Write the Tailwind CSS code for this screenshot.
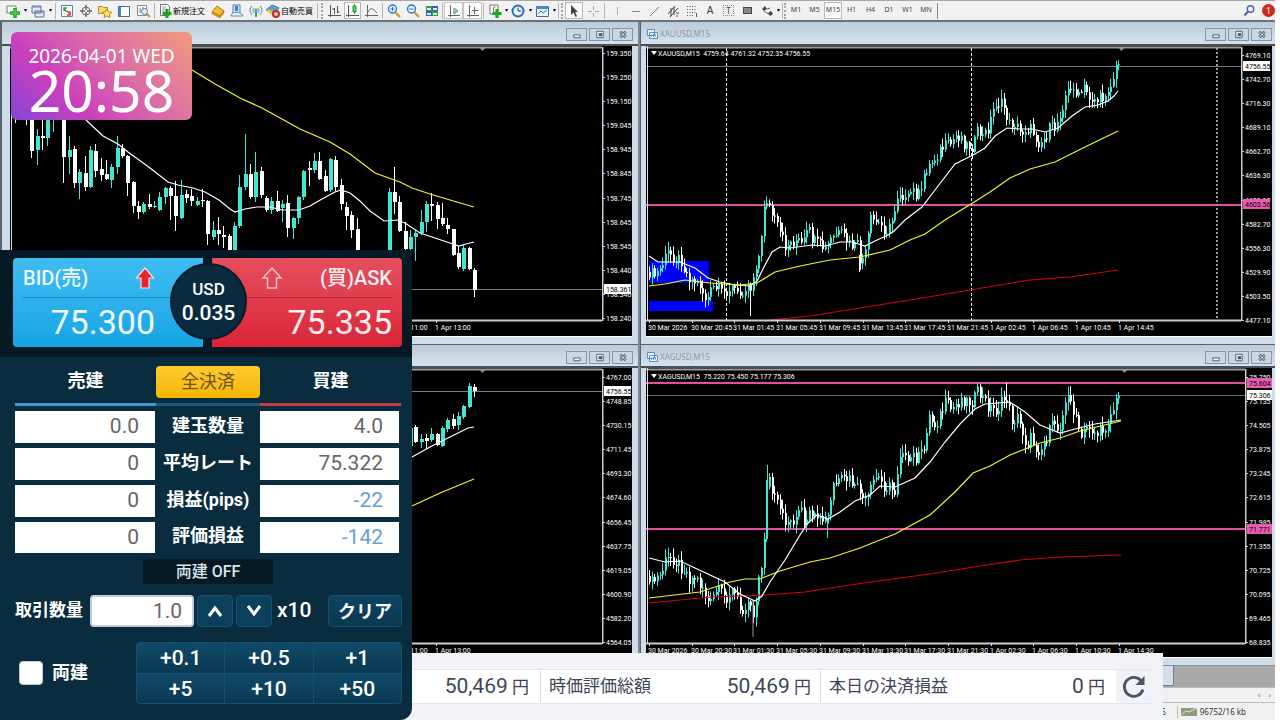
<!DOCTYPE html>
<html lang="ja">
<head>
  <meta charset="UTF-8" />
  <meta name="viewport" content="width=device-width, initial-scale=1.0" />
  <title>XAGUSD,M15</title>
  <script src="https://cdn.jsdelivr.net/npm/@tailwindcss/browser@4"></script>
</head>
<body class="relative h-screen min-h-[720px] flex flex-col overflow-hidden bg-white font-['Noto_Sans','Noto_Sans_CJK_JP',sans-serif] text-black">

  <!-- Toolbar -->
  <header class="h-[22px] shrink-0 mr-[5px] flex items-center bg-[#f1f1f1] border-t border-[#a8a8a8] border-b-2 border-b-[#6b7178] text-[8px] whitespace-nowrap">
    <div class="flex items-center pl-1">
      <button aria-label="New chart" class="w-[18px] h-[18px] grid place-items-center"><svg class="size-4" viewBox="0 0 16 16"><path d="M2 3h9v7H2z" fill="#fff" stroke="#6b8a6b"/><path d="M10 5v10M5 10h10" stroke="#16a51e" stroke-width="3.4"/><path d="M10 6v8M6 10h8" stroke="#5ce05c"/></svg></button>
      <span class="w-[7px] text-[6px] text-center">▾</span>
      <button aria-label="Profiles" class="w-[18px] h-[18px] grid place-items-center"><svg class="size-4" viewBox="0 0 16 16"><path d="M2 3h9v7H2zM5 8h9v6H5z" fill="#dfe8f5" stroke="#5f7597"/><path d="M2 4h9M5 9h9" stroke="#5f83bb"/></svg></button>
      <span class="w-[7px] text-[6px] text-center">▾</span>
      <span class="w-px h-4 bg-[#b5b5b5] mx-[1px]"></span>
      <button aria-label="Market Watch" class="w-[19px] h-[18px] grid place-items-center"><svg class="size-4" viewBox="0 0 16 16"><path d="M2.500 2.500h11v11h-11z" fill="#fff" stroke="#5b86b8"/><path d="M5 8V5h3M4.500 5.500l3 3" stroke="#22a03a" stroke-width="1.500" fill="none"/><path d="M11 8v4H8M8 8l3 3" stroke="#d0433a" stroke-width="1.500" fill="none"/></svg></button>
      <button aria-label="Data Window" class="w-[19px] h-[18px] grid place-items-center"><svg class="size-4" viewBox="0 0 16 16" fill="none" stroke="#6b6b6b"><circle cx="8" cy="8" r="4"/><path d="M8 2v5M8 9v5M2 8h5M9 8h5" stroke-width="1.500"/></svg></button>
      <button aria-label="Navigator" class="w-[19px] h-[18px] grid place-items-center"><svg class="size-4" viewBox="0 0 16 16"><path d="M1.500 3.500h4l1 1h4v6h-9z" fill="#f7d977" stroke="#b58b1c"/><path d="M10 6l1.500 2.800 3.200.4-2.300 2.200.6 3.200-3-1.600-2.900 1.600.6-3.200L5.500 9.200l3-.4z" fill="#ffe45c" stroke="#b58b1c"/></svg></button>
      <button aria-label="Terminal" class="w-[19px] h-[18px] grid place-items-center"><svg class="size-4" viewBox="0 0 16 16"><path d="M2.500 3.500h11v10h-11z" fill="#fff" stroke="#3d6ea8"/><path d="M3 4h2v9H3z" fill="#4a86c8"/></svg></button>
      <button aria-label="Strategy Tester" class="w-[19px] h-[18px] grid place-items-center"><svg class="size-4" viewBox="0 0 16 16" fill="none"><path d="M2.500 2.500h9v10h-9z" fill="#fff" stroke="#8a8a8a"/><path d="M5 10V5M8 9V4" stroke="#777"/><circle cx="9.500" cy="8.500" r="3" fill="#dfeeff" stroke="#5f7fa5"/><path d="M12 11l3 3" stroke="#c39b34" stroke-width="2"/></svg></button>
      <span class="w-px h-4 bg-[#b5b5b5] mx-[2px]"></span>
      <button class="flex items-center h-[18px] pr-[3px] font-['Noto_Sans_CJK_JP',sans-serif]"><svg class="size-4" viewBox="0 0 16 16"><path d="M3.500 1.500h7l2 2v9h-9z" fill="#fff" stroke="#777"/><path d="M5 4h4M5 6h5M5 8h4" stroke="#999"/><path d="M10 6v9M5.500 10.500h9" stroke="#19a823" stroke-width="3"/></svg>新規注文</button>
      <button aria-label="MetaEditor" class="w-[19px] h-[18px] grid place-items-center"><svg class="size-4" viewBox="0 0 16 16"><path d="M2 9l5-6 7 5-4 5z" fill="#f2bd34" stroke="#a67713"/><path d="M2 9v2l8 4 4-5V8l-4 5z" fill="#d99a1b" stroke="#a67713" stroke-width=".5"/></svg></button>
      <button aria-label="Community" class="w-[19px] h-[18px] grid place-items-center"><svg class="size-4" viewBox="0 0 16 16"><path d="M4 2h7v8H4z" fill="#cfe4f8" stroke="#3f83c4"/><path d="M6 3h3v5H6z" fill="#3f83c4"/><path d="M2 13c0-5 11-5 12 0z" fill="#e4eef8" stroke="#6d8fb3"/></svg></button>
      <button aria-label="Signals" class="w-[19px] h-[18px] grid place-items-center"><svg class="size-4" viewBox="0 0 16 16" fill="none"><path d="M4 12a6 6 0 0 1 0-9M12 3a6 6 0 0 1 0 9M6 10a4 4 0 0 1 0-5M10 5a4 4 0 0 1 0 5" stroke="#7ba6bd" stroke-width="1.200"/><path d="M8 7v7" stroke="#3fa565" stroke-width="2"/><circle cx="8" cy="7" r="1.500" fill="#3fa565"/></svg></button>
      <button class="flex items-center h-[18px] font-['Noto_Sans_CJK_JP',sans-serif]"><svg class="size-4" viewBox="0 0 16 16"><path d="M1 7l6-5 7 3-5 6z" fill="#5aa4dd" stroke="#3876a8"/><path d="M2 8l6 5 3-3-8-4z" fill="#f3c536"/><circle cx="11" cy="11" r="4" fill="#d3271f"/><path d="M9.500 9.500h3v3h-3z" fill="#fff"/></svg>自動売買</button>
      <span class="w-px h-4 bg-[#b5b5b5] ml-1"></span>
    </div>
    <div class="flex items-center pl-[3px]">
      <span class="h-4 border-l-2 border-dotted border-[#a5a5a5] mr-[2px]"></span>
      <button aria-label="Bar chart" class="w-[19px] h-[18px] grid place-items-center"><svg class="size-4" viewBox="0 0 16 16" fill="none" stroke="#555"><path d="M3.500 2v12M1 12.500h13M7.500 5v6M7 6h-2M10.500 3v7M10.500 9h2"/></svg></button>
      <button aria-label="Candlesticks" aria-pressed="true" class="w-[17px] h-[17px] grid place-items-center bg-[#fafafa] border border-[#b8b8b8]"><svg class="size-4" viewBox="0 0 16 16" fill="none" stroke="#555"><path d="M3.500 2v12M1 12.500h13"/><path d="M9.500 1v10" stroke="#1a9c2e"/><path d="M8 3h3v6H8z" fill="#57d266" stroke="#1a9c2e"/></svg></button>
      <button aria-label="Line chart" class="w-[21px] h-[18px] grid place-items-center"><svg class="size-4" viewBox="0 0 16 16" fill="none" stroke="#666"><path d="M3.500 2v12M1 12.500h13M4 9c3-5 4-4 9 1"/></svg></button>
      <span class="w-px h-4 bg-[#b5b5b5] mr-[1px]"></span>
      <button aria-label="Zoom in" class="w-[19px] h-[18px] grid place-items-center"><svg class="size-4" viewBox="0 0 16 16" fill="none"><path d="M9.500 9.500l4.500 4.500" stroke="#c9a227" stroke-width="2.400"/><circle cx="6.500" cy="6" r="4" fill="#e4f1ff" stroke="#2f77c6" stroke-width="1.400"/><path d="M6.500 4v4M4.500 6h4" stroke="#2f77c6"/></svg></button>
      <button aria-label="Zoom out" class="w-[19px] h-[18px] grid place-items-center"><svg class="size-4" viewBox="0 0 16 16" fill="none"><path d="M9.500 9.500l4.500 4.500" stroke="#c9a227" stroke-width="2.400"/><circle cx="6.500" cy="6" r="4" fill="#e4f1ff" stroke="#2f77c6" stroke-width="1.400"/><path d="M4.500 6h4" stroke="#2f77c6"/></svg></button>
      <button aria-label="Tile windows" class="w-[19px] h-[18px] grid place-items-center"><svg class="size-4" viewBox="0 0 16 16"><path d="M2 3h6v5H2z" fill="#3c9a46"/><path d="M8 3h6v5H8z" fill="#2e66ad"/><path d="M2 8h6v5H2z" fill="#2e66ad"/><path d="M8 8h6v5H8z" fill="#3c9a46"/><path d="M3 5h4v2H3zM9 5h4v2H9zM3 10h4v2H3zM9 10h4v2H9z" fill="#dfeaf5"/></svg></button>
      <span class="w-px h-4 bg-[#b5b5b5] mx-[1px]"></span>
      <button aria-label="Auto scroll" aria-pressed="true" class="w-[19px] h-[17px] grid place-items-center bg-[#fafafa] border border-[#c4c4c4]"><svg class="size-4" viewBox="0 0 16 16" fill="none" stroke="#666"><path d="M4.500 2v12M2 12.500h12"/><path d="M8 5l4 3-4 3z" fill="#a8d5a8" stroke="#5b9a68"/></svg></button>
      <button aria-label="Chart shift" aria-pressed="true" class="w-[19px] h-[17px] grid place-items-center bg-[#fafafa] border border-[#c4c4c4]"><svg class="size-4" viewBox="0 0 16 16" fill="none" stroke="#666"><path d="M4.500 2v12M2 12.500h12M9.500 4v7M7 7.500h6"/></svg></button>
      <span class="w-px h-4 bg-[#b5b5b5] mx-[1px]"></span>
      <button aria-label="Indicators" class="w-[19px] h-[18px] grid place-items-center"><svg class="size-4" viewBox="0 0 16 16"><path d="M3 2h8v9H3z" fill="#fff" stroke="#777"/><path d="M6.500 9V5q0-1.500 2-1" fill="none" stroke="#777"/><path d="M10 6v9M5.500 10.500h9" stroke="#19a823" stroke-width="3.200"/></svg></button>
      <span class="w-[4px] text-[6px] text-center">▾</span>
      <button aria-label="Periods" class="w-[20px] h-[18px] grid place-items-center"><svg class="size-4" viewBox="0 0 16 16"><circle cx="8" cy="8" r="5.500" fill="#e9f3ff" stroke="#2a6dbb" stroke-width="2"/><path d="M8 4.500V8h3" stroke="#333" fill="none"/></svg></button>
      <span class="w-[4px] text-[6px] text-center">▾</span>
      <button aria-label="Templates" class="w-[20px] h-[18px] grid place-items-center"><svg class="size-4" viewBox="0 0 16 16"><path d="M2.500 3.500h12v10h-12z" fill="#e9f3ff" stroke="#3d6ea8"/><path d="M2 3h13v3H2z" fill="#4a86c8"/><path d="M4 11l3-3 2 2 4-3" fill="none" stroke="#3c9a46"/></svg></button>
      <span class="w-[4px] text-[6px] text-center">▾</span>
      <span class="w-px h-4 bg-[#b5b5b5] ml-[2px]"></span>
    </div>
    <div class="flex items-center pl-[2px]">
      <span class="h-4 border-l-2 border-dotted border-[#a5a5a5] mr-[2px]"></span>
      <button aria-label="Cursor" aria-pressed="true" class="w-[18px] h-[17px] grid place-items-center bg-[#fafafa] border border-[#b8b8b8]"><svg class="size-4" viewBox="0 0 16 16"><path d="M5 2v10l2.500-2.500L9.500 14l1.500-.8L9.200 9H12z" fill="#444"/></svg></button>
      <button aria-label="Crosshair" class="w-[19px] h-[18px] grid place-items-center"><svg class="size-4" viewBox="0 0 16 16" stroke="#aaa"><path d="M8.500 3v4M8.500 10v4M3 8.500h4M10 8.500h4"/></svg></button>
      <span class="w-px h-4 bg-[#b5b5b5] mx-[2px]"></span>
      <button aria-label="Vertical line" class="w-[19px] h-[18px] grid place-items-center"><svg class="size-4" viewBox="0 0 16 16" stroke="#aaa"><path d="M8.500 4v8"/></svg></button>
      <button aria-label="Horizontal line" class="w-[19px] h-[18px] grid place-items-center"><svg class="size-4" viewBox="0 0 16 16" stroke="#888"><path d="M4 8.500h8"/></svg></button>
      <button aria-label="Trend line" class="w-[18px] h-[18px] grid place-items-center"><svg class="size-4" viewBox="0 0 16 16" stroke="#777"><path d="M4 13l9-9"/></svg></button>
      <button aria-label="Channel" class="w-[19px] h-[18px] grid place-items-center"><svg class="size-4" viewBox="0 0 16 16" stroke="#444" fill="none"><path d="M3 11l7-8M5 14l8-9M6 5v8M9 4v8M11 10h3M11 13h2"/></svg></button>
      <button aria-label="Fibonacci" class="w-[19px] h-[18px] grid place-items-center"><svg class="size-4" viewBox="0 0 16 16" stroke="#555" stroke-dasharray="1 1.500"><path d="M3 3.500h10M3 6.500h10M3 9.500h10M3 12.500h6"/><path d="M12.500 10v4" stroke-dasharray="none"/></svg></button>
      <button aria-label="Text" class="w-[18px] h-[18px] text-[10px] leading-none text-[#444] font-['Liberation_Sans',sans-serif]">A</button>
      <button aria-label="Text label" class="w-[19px] h-[18px] grid place-items-center"><span class="border border-dotted border-[#888] px-[2px] text-[8px] leading-[9px] text-[#444]">T</span></button>
      <button aria-label="Shapes" class="w-[19px] h-[18px] grid place-items-center"><span class="w-[9px] h-[7px] bg-[#888] border border-[#444]"></span></button>
      <button aria-label="Arrows" class="w-[19px] h-[18px] grid place-items-center"><svg class="size-4" viewBox="0 0 16 16" fill="#444"><path d="M3 6l3-3 2 3-3 2zM9 10l3-2 2 3-3 2z"/><path d="M5 8l6 4M8 6l3-1" stroke="#666" fill="none"/></svg></button>
      <span class="w-[5px] text-[6px] text-center">▾</span>
      <span class="w-px h-4 bg-[#b5b5b5] mx-[1px]"></span>
    </div>
    <div class="flex items-center text-[7px] text-[#444]">
      <span class="h-4 border-l-2 border-dotted border-[#a5a5a5] mr-[1px]"></span>
      <button class="w-[18px]">M1</button>
      <button class="w-[19px]">M5</button>
      <button aria-pressed="true" class="w-[18px] h-[17px] bg-[#fafafa] border border-[#b8b8b8]">M15</button>
      <button class="w-[19px]">H1</button>
      <button class="w-[19px]">H4</button>
      <button class="w-[18px]">D1</button>
      <button class="w-[19px]">W1</button>
      <button class="w-[18px]">MN</button>
      <span class="w-px h-4 bg-[#888] ml-[2px]"></span>
    </div>
    <div class="ml-auto flex items-center gap-[5px]">
      <button aria-label="Search" class="w-4 h-[18px] grid place-items-center"><svg class="size-4" viewBox="0 0 16 16" fill="none" stroke="#4a62a8"><circle cx="9.500" cy="6" r="3.200" stroke-width="1.400"/><path d="M7 8.500l-3.500 4" stroke-width="2"/></svg></button>
      <button aria-label="Notifications" class="w-[13px] h-[18px]"><span class="block size-[13px] rounded-full bg-[#d0261e] text-white text-[9px] leading-[13px]">1</span></button>
    </div>
  </header>

  <!-- Chart windows -->
  <main class="flex-1 min-h-0 mr-[5px] grid grid-cols-[128fr_127fr] grid-rows-[322px_1fr] font-['Noto_Sans',sans-serif]">
    <section class="min-h-0 flex flex-col pl-2 pr-[6px] pb-[7px] bg-[#cfdce9] border-l-2 border-[#59636e] border-r-2 border-r-[#7d8893]">
      <div class="h-6 shrink-0 -ml-2 -mr-[6px] pl-2 pr-[5px] pt-[2px] flex items-center justify-between bg-linear-to-b from-[#bccbd8] to-[#d5e2ee] border-b-2 border-[#4a4f55]">
        <h2></h2>
        <div data-controls class="flex gap-[2px]"></div>
      </div>
      <div class="flex-1 min-h-0 flex bg-black border-b border-white">
        <svg id="plot-usdjpy" class="flex-1 min-w-0 h-full"></svg>
        <svg id="axis-usdjpy" class="w-[30px] h-full"></svg>
      </div>
    </section>

    <section class="min-h-0 flex flex-col pl-[5px] pr-[3px] pb-[7px] bg-[#cfdce9] border-l border-[#59636e]">
      <div class="h-6 shrink-0 -ml-[5px] -mr-[3px] pl-[5px] pr-[3px] pt-[2px] flex items-center justify-between bg-linear-to-b from-[#bccbd8] to-[#d5e2ee] border-b-2 border-[#4a4f55]">
        <h2 class="flex items-center gap-[2px] text-[8px] text-[#8e99a5]"><svg class="size-3" viewBox="0 0 12 12" fill="#eaf3ff" stroke="#5a8fc4"><path d="M1.500 1.500h7v6h-7zM3.500 4.500h8v6h-8z"/><path d="M5.500 6.500v2M7.500 6v3M9.500 6.500v2"/></svg>XAUUSD,M15</h2>
        <div data-controls class="flex gap-[2px]"></div>
      </div>
      <div class="flex-1 min-h-0 flex bg-black border-b border-white">
        <svg id="plot-xauusd" class="flex-1 min-w-0 h-full"></svg>
        <svg id="axis-xauusd" class="w-[31px] h-full"></svg>
      </div>
    </section>

    <section class="min-h-0 flex flex-col pl-2 pr-[6px] pb-[7px] bg-[#cfdce9] border-l-2 border-[#59636e] border-r-2 border-r-[#7d8893]">
      <div class="h-6 shrink-0 -ml-2 -mr-[6px] pl-2 pr-[5px] pt-[3px] flex items-center justify-between bg-linear-to-b from-[#bccbd8] to-[#d5e2ee] border-t border-t-[#59636e] border-b-2 border-b-[#4a4f55]">
        <h2></h2>
        <div data-controls class="flex gap-[2px]"></div>
      </div>
      <div class="flex-1 min-h-0 flex bg-black border-b border-white">
        <svg id="plot-gold" class="flex-1 min-w-0 h-full"></svg>
        <svg id="axis-gold" class="w-[30px] h-full"></svg>
      </div>
    </section>

    <section class="min-h-0 flex flex-col pl-[5px] pr-[3px] pb-[7px] bg-[#cfdce9] border-l border-[#59636e]">
      <div class="h-6 shrink-0 -ml-[5px] -mr-[3px] pl-[5px] pr-[3px] pt-[3px] flex items-center justify-between bg-linear-to-b from-[#bccbd8] to-[#d5e2ee] border-t border-t-[#59636e] border-b-2 border-b-[#4a4f55]">
        <h2 class="flex items-center gap-[2px] text-[8px] text-[#8e99a5]"><svg class="size-3" viewBox="0 0 12 12" fill="#eaf3ff" stroke="#5a8fc4"><path d="M1.500 1.500h7v6h-7zM3.500 4.500h8v6h-8z"/><path d="M5.500 6.500v2M7.500 6v3M9.500 6.500v2"/></svg>XAGUSD,M15</h2>
        <div data-controls class="flex gap-[2px]"></div>
      </div>
      <div class="flex-1 min-h-0 flex bg-black border-b border-white">
        <svg id="plot-xagusd" class="flex-1 min-w-0 h-full"></svg>
        <svg id="axis-xagusd" class="w-[27px] h-full"></svg>
      </div>
    </section>
  </main>

  <!-- Chart tabs and status bar -->
  <footer class="shrink-0 mr-[5px] text-[8px] text-[#333]">
    <div class="h-[22px] bg-[#a9a9a9] border-t border-[#8e8e8e] pl-[1100px]"><div class="w-[74px] h-5 bg-[#d3deea] border border-t-0 border-[#6f7c8c] rounded-b-xs"></div></div>
    <div class="h-4 bg-[#f0f0f0] border-y border-y-[#bbb] flex items-center justify-end gap-2 pr-1 text-[#777]"><span>‹</span><span>›</span></div>
    <div class="h-[17px] bg-[#f0f0f0] flex items-center justify-end pr-[29px]">
      <span class="mr-[11px]">6</span>
      <span class="flex items-center gap-[3px] border-l border-[#bbb] pl-[3px]"><svg class="w-4 h-2" viewBox="0 0 16 8"><path d="M0 0h16v8H0z" fill="#8d9a7c"/><path d="M0 7l5-4 3 1 8-4" stroke="#dde3d5" fill="none"/></svg>96752/16 kb</span>
    </div>
  </footer>

  <!-- Account bar -->
  <section class="absolute left-0 bottom-0 w-[1163px] h-[67px] pl-[400px] pr-[11px] py-4 bg-[#f1f3f8] font-['Roboto','Noto_Sans_CJK_JP',sans-serif] text-[#3c4656]">
    <dl class="h-[35px] flex items-center bg-white border-y border-[#e3e6ec] text-[17px]">
      <dd class="w-[141px] pr-[11px] text-right border-r border-[#d9dde5]"><span class="text-[21px]">50,469</span> 円</dd>
      <dt class="pl-2">時価評価総額</dt>
      <dd class="flex-1 pr-[9px] text-right border-r border-[#d9dde5]"><span class="text-[21px]">50,469</span> 円</dd>
      <dt class="pl-2">本日の決済損益</dt>
      <dd class="w-[168px] pr-[11px] text-right"><span class="text-[21px]">0</span> 円</dd>
      <dd class="w-9 h-full bg-[#f1f3f8]"><button aria-label="更新" class="w-full h-full grid place-items-center"><svg class="size-[26px]" viewBox="0 0 26 26" fill="none"><path d="M20 6.500a9.500 9.500 0 1 0 2 9" stroke="#4a5568" stroke-width="2.800"/><path d="M23.500 2v9H14.500z" fill="#4a5568"/></svg></button></dd>
    </dl>
  </section>

  <!-- Trading panel -->
  <section class="absolute left-0 bottom-0 w-[412px] h-[470px] rounded-br-xl overflow-hidden bg-[#092c3e] font-['Roboto','Noto_Sans_CJK_JP',sans-serif] text-white">
    <div class="relative h-[107px] bg-[#051a25] px-[13px] pt-2 pr-[10px] flex gap-[9px]">
      <button class="flex-1 h-[89px] rounded-l-sm bg-linear-to-b from-[#3fbdf2] to-[#12a4e4] pl-[10px] text-left text-[#eef8ff]">
        <span class="h-[39px] pr-[48px] flex items-center justify-between border-b border-[#1d87bd] text-[20px] font-medium">BID(売)
          <svg class="w-5 h-6" viewBox="0 0 20 24"><path d="M10 2l8.500 10H14v10H6V12H1.500z" fill="#e8232c" stroke="#f4dfe2" stroke-width="1.200"/></svg>
        </span>
        <span class="block pr-[48px] text-right text-[34px] leading-[48px]">75.300</span>
      </button>
      <button class="flex-1 h-[89px] rounded-r-sm bg-linear-to-b from-[#e44e5d] to-[#dc2238] pr-[10px] text-right text-[#fff0f0]">
        <span class="h-[39px] pl-[48px] flex items-center justify-between border-b border-[#b3243a] text-[20px] font-medium">
          <svg class="w-6 h-6" viewBox="0 0 24 24"><path d="M12 2l9 10h-4.500v10h-9V12H3z" fill="none" stroke="#f6c4c9" stroke-width="1.500"/></svg>(買)ASK
        </span>
        <span class="block text-right text-[34px] leading-[48px]">75.335</span>
      </button>
      <div class="absolute left-[170px] top-[13px] size-[77px] rounded-full bg-[#0a2a40] border-2 border-[#071d2a] flex flex-col items-center justify-center font-medium">
        <span class="text-[17px] leading-[23px]">USD</span>
        <span class="text-[21px] leading-[25px]">0.035</span>
      </div>
    </div>

    <table class="ml-[15px] w-[386px] table-fixed border-separate border-spacing-0 text-[18px]">
      <thead>
        <tr class="h-[49px]">
          <th class="w-[141px] border-b-3 border-[#3f98cd] font-bold">売建</th>
          <th class="w-[104px] border-b-3 border-[#1b5a7c]"><button class="w-full h-8 mt-[3px] rounded-sm bg-linear-to-b from-[#ffcb2b] to-[#f7b500] text-[#6a5420] font-normal">全決済</button></th>
          <th class="border-b-3 border-[#c53c44] font-bold">買建</th>
        </tr>
      </thead>
      <tbody class="text-[21px] text-right text-[#666]">
        <tr class="h-[37px]"><td class="border-t-5 border-r border-[#092c3e] bg-white bg-clip-padding pr-4">0.0</td><th class="pt-[2px] text-center text-[18px] text-white whitespace-nowrap">建玉数量</th><td class="border-t-5 border-r-2 border-[#092c3e] bg-white bg-clip-padding pr-4">4.0</td></tr>
        <tr class="h-[37px]"><td class="border-t-5 border-r border-[#092c3e] bg-white bg-clip-padding pr-4">0</td><th class="pt-[2px] text-center text-[18px] text-white whitespace-nowrap">平均レート</th><td class="border-t-5 border-r-2 border-[#092c3e] bg-white bg-clip-padding pr-4">75.322</td></tr>
        <tr class="h-[36px]"><td class="border-t-5 border-r border-[#092c3e] bg-white bg-clip-padding pr-4">0</td><th class="pt-[2px] text-center text-[18px] text-white whitespace-nowrap">損益(pips)</th><td class="border-t-5 border-r-2 border-[#092c3e] bg-white bg-clip-padding pr-4 text-[#64a0d8]">-22</td></tr>
        <tr class="h-[36px]"><td class="border-t-5 border-r border-[#092c3e] bg-white bg-clip-padding pr-4">0</td><th class="pt-[2px] text-center text-[18px] text-white whitespace-nowrap">評価損益</th><td class="border-t-5 border-r-2 border-[#092c3e] bg-white bg-clip-padding pr-4 text-[#64a0d8]">-142</td></tr>
      </tbody>
    </table>

    <div class="mt-[6px] ml-[143px] w-[130px] h-[25px] bg-[#051a25] text-center text-[16px] leading-[25px] font-medium text-[#dde3e6]">両建 OFF</div>

    <div class="mt-[11px] pl-[15px] pr-[10px] h-8 flex items-center">
      <label for="qty" class="w-[75px] text-[17px] font-bold whitespace-nowrap">取引数量</label>
      <input id="qty" type="text" value="1.0" class="w-[104px] h-8 rounded-sm bg-white border-2 border-[#c5ced8] pr-[10px] text-right text-[21px] text-[#666]" />
      <button aria-label="増やす" class="ml-[3px] w-9 h-8 rounded-sm bg-[#0b405c] border border-[#17506c] grid place-items-center"><svg class="size-4" viewBox="0 0 16 16" fill="none" stroke="#fff" stroke-width="3"><path d="M2 13l6-8 6 8"/></svg></button>
      <button aria-label="減らす" class="ml-[3px] w-9 h-8 rounded-sm bg-[#0b405c] border border-[#17506c] grid place-items-center"><svg class="size-4" viewBox="0 0 16 16" fill="none" stroke="#fff" stroke-width="3"><path d="M2 3l6 8 6-8"/></svg></button>
      <span class="ml-[5px] text-[21px] font-medium">x10</span>
      <button class="ml-auto w-[74px] h-8 rounded-sm bg-linear-to-b from-[#0d4462] to-[#0a3850] border border-[#17506c] text-[18px] font-bold">クリア</button>
    </div>

    <div class="mt-[15px] pl-[19px] pr-[10px] flex items-center justify-between">
      <label class="flex items-center gap-[9px] text-[18px] leading-6 font-bold"><input type="checkbox" class="appearance-none size-6 rounded-sm bg-white border border-[#c5ced8]" />両建</label>
      <div class="w-[266px] h-[62px] grid grid-cols-3 grid-rows-2 gap-px rounded-sm overflow-hidden border border-[#14516e] bg-[#14516e] text-[21px] font-medium">
        <button class="bg-linear-to-b from-[#0f4a69] to-[#0a3952]">+0.1</button>
        <button class="bg-linear-to-b from-[#0f4a69] to-[#0a3952]">+0.5</button>
        <button class="bg-linear-to-b from-[#0f4a69] to-[#0a3952]">+1</button>
        <button class="bg-linear-to-b from-[#0f4a69] to-[#0a3952]">+5</button>
        <button class="bg-linear-to-b from-[#0f4a69] to-[#0a3952]">+10</button>
        <button class="bg-linear-to-b from-[#0f4a69] to-[#0a3952]">+50</button>
      </div>
    </div>
  </section>

  <!-- Clock -->
  <div class="absolute left-[11px] top-8 w-[181px] h-[88px] rounded-md bg-linear-45 from-[#8442d6] via-[#cb3dbd] via-30% to-[#f29a7c] pt-3 text-center text-white font-['Noto_Sans',sans-serif]">
    <div class="text-[19px] leading-6">2026-04-01 WED</div>
    <div class="text-[57px] leading-[44px]">20:58</div>
  </div>

  <script>
    const TEAL = '#40e8d4', PINK = '#e0509f';

    // window buttons
    document.querySelectorAll('[data-controls]').forEach(el => {
      const shapes = [
        ['最小化', '<path d="M3.500 6.500h7v3h-7z"/>'],
        ['最大化', '<path d="M3.500 2.500h7v7h-7z"/><path d="M6 5h3v2.500H6z" fill="#4d5a68"/>'],
        ['閉じる', '<path d="M4 3l6 6M10 3l-6 6" stroke-width="3"/><path d="M4 3l6 6M10 3l-6 6" stroke="#fff"/>']
      ];
      el.innerHTML = shapes.map(s => `
        <button aria-label="${s[0]}" class="w-[21px] h-[13px] grid place-items-center bg-[#c9d6e3] border border-[#8795a4]">
          <svg class="w-[14px] h-[11px]" viewBox="0 0 14 12" fill="#eef3f8" stroke="#4d5a68">${s[1]}</svg>
        </button>`).join('');
    });

    const text = (x, y, s, fill = '#fff') =>
      `<text x="${x}" y="${y}" fill="${fill}" font-size="7" font-family="Roboto, sans-serif">${s}</text>`;
    const line = (pts, color) =>
      `<polyline points="${pts}" fill="none" stroke="${color}" stroke-width="1.2"/>`;
    const hline = (y, color, w = 1) =>
      `<rect x="0" y="${y}" width="3000" height="${w}" fill="${color}"/>`;

    // one candle: high, body top, body bottom, low
    function candle(x, h, t, b, l, up, w) {
      const c = up ? TEAL : '#fff';
      return `<path d="M${x} ${h}V${l}" stroke="${c}"/><rect x="${x + .5 - w / 2}" y="${t}" width="${w}" height="${Math.max(1, b - t)}" fill="${c}"/>`;
    }

    // dense candles along a track of "x,y" points
    function denseCandles(track, amp, extra) {
      const p = track.split(' ').map(s => s.split(',').map(Number));
      const rnd = n => { const v = Math.sin(n * 12.9898) * 43758.5453; return v - Math.floor(v); };
      const at = x => {
        let k = 1;
        while (k < p.length - 1 && p[k][0] < x) k++;
        const [x0, y0] = p[k - 1], [x1, y1] = p[k];
        return y0 + (y1 - y0) * Math.min(1, (x - x0) / (x1 - x0));
      };
      let out = '', prev = p[0][1];
      for (let x = p[0][0], i = 1; x <= p[p.length - 1][0]; x += 2.667, i++) {
        const close = at(x) + (rnd(i) - .5) * amp;
        const t = Math.min(prev, close), b = Math.max(prev, close);
        out += candle(Math.round(x) + .5, t - 1 - rnd(i + 500) * amp * .6, t, b, b + 1 + rnd(i + 900) * amp * .6, close < prev, 2);
        prev = close;
      }
      extra.forEach(e => out += `<path d="M${e[0]} ${e[1]}V${e[2]}" stroke="${e[3]}"/>`);
      return out;
    }

    function plot(id, ox, oy, bottom, marker, times, body) {
      let s = body;
      s += `<path d="M0 ${oy + 1.500}H3000" stroke="#9b9b9b" stroke-width="2"/><path d="M${ox + 1.500} ${oy}V${bottom}" stroke="#ddd"/>`;
      s += `<path d="M${marker - 3} ${oy + 1}h7l-3.500 4z" fill="#999"/>`;
      s += `<rect x="0" y="${bottom}" width="3000" height="40" fill="#000"/><path d="M0 ${bottom + .5}H3000" stroke="#ccc" stroke-width="2"/>`;
      times.forEach(t => s += `<path d="M${t[0] + .5} ${bottom}v3" stroke="#ddd"/>` + text(t[0] - 1, bottom + 10, t[1]));
      document.getElementById('plot-' + id).innerHTML = `<g transform="translate(${-ox},${-oy})">${s}</g>`;
    }

    function axis(id, oy, first, bottom, labels, tags) {
      let s = `<path d="M.5 ${oy + 1}V${bottom + 1}" stroke="#ccc" stroke-width="2"/>`;
      labels.split(' ').forEach((l, i) => {
        const y = first + i * 24 + (i > 5 ? 1 : 0);
        s += `<path d="M1 ${y + .5}h2" stroke="#ccc"/>` + text(4, y + 3, l);
      });
      tags.forEach(t => s += `<rect x="2" y="${t[0] - 5}" width="27" height="10" fill="${t[2]}"/>` + text(4, t[0] + 3, t[1], t[3]));
      document.getElementById('axis-' + id).innerHTML = `<g transform="translate(0,${-oy})">${s}</g>`;
    }

    const wide = (data, from) => data.map((c, i) =>
      c ? candle(Math.floor(15.67 + (from + i) * 5.3333) + .5, c[0], c[1], c[2], c[3], c[4], 4) : '').join('');

    // USDJPY
    const usdjpy = [
      [110,112,116,123,0],[105,108,115,118,1],[110,112,118,125,0],[105,110,151,158,0],[129,136,150,165,1],[118,136,138,150,0],
      [105,112,138,146,1],[108,112,120,132,1],[100,104,110,115,1],[108,112,157,183,0],[136,150,157,174,1],[146,149,183,188,0],
      [169,172,183,199,1],[156,173,187,191,0],[146,150,187,188,1],[144,151,171,177,0],[158,169,175,181,0],[160,174,179,180,0],
      [164,167,180,188,1],[136,148,167,174,1],[144,148,156,158,0],[155,156,183,196,0],[181,182,206,213,0],[201,206,212,219,0],
      [202,204,212,214,1],[194,204,207,209,0],[201,206,207,208,1],[192,197,210,211,1],[187,188,197,204,1],[186,188,196,220,0],
      [181,196,216,231,0],[180,195,218,219,1],[190,194,198,203,0],[189,196,201,206,0],[197,201,205,206,1],[189,200,201,207,0],
      [200,201,234,245,0],[221,230,237,240,1],[217,230,234,245,0],[226,235,237,248,0],[234,236,250,252,0],[222,226,252,254,1],
      [175,187,226,228,1],[134,174,187,190,1],[164,174,197,199,0],[152,172,197,202,1],[167,171,195,198,0],[196,198,210,212,0],
      [197,201,210,214,1],[191,201,211,212,0],[200,204,208,222,1],[195,203,228,237,0],[217,218,228,239,1],[196,197,218,224,1],
      [170,171,197,200,1],[161,168,170,186,0],[153,161,170,173,1],[152,161,179,180,0],[170,176,191,192,0],[158,159,190,192,1],
      [156,160,187,191,0],[179,185,204,210,0],[202,207,216,230,0],[211,215,230,238,0],[218,229,256,260,0],null,null,null,null,null,
      [188,192,256,260,1],[167,192,202,214,0],[196,202,231,232,0],[222,231,249,250,0],[230,237,249,250,1],[230,233,237,261,1],
      [210,222,233,235,1],[201,204,222,232,1],[193,204,206,221,0],[202,205,219,229,0],[203,218,224,226,0],[218,225,229,234,0],
      [229,229,255,256,0],[246,253,267,269,0],[245,248,269,271,1],[247,248,269,270,0],[268,270,290,297,0]
    ];
    plot('usdjpy', 10, 46, 320, 482, [[393, '1 Apr 11:00'], [436, '1 Apr 13:00']],
      hline(289, '#778088') + wide(usdjpy, 0) +
      line('86,120 103,136 118,144 128,152 150,168 168,182 178,185 193,188 205,192 219,200 230,209 235,212 245,209 257,207 270,207 282,210 299,210 310,206 322,199 335,192 341,190 350,193 360,201 370,211 384,221 397,220 405,223 420,233 435,238 450,243 459,246 466,244 474,242', '#fff') +
      line('180,63 192,70 215,84 240,98 262,108 282,119 300,129 330,142 350,154 375,173 400,182 412,188 430,194 450,200 474,207', '#f4f428'));
    axis('usdjpy', 46, 53, 320, '159.350 159.250 159.150 159.045 158.945 158.845 158.745 158.645 158.545 158.440 158.340 158.240',
      [[289, '158.361', '#fff', '#000']]);

    // XAUUSD
    const days = m => ['30 Mar 2026', '30 Mar 20:' + m, '31 Mar 01:' + m, '31 Mar 05:' + m, '31 Mar 09:' + m, '31 Mar 13:' + m,
      '31 Mar 17:' + m, '31 Mar 21:' + m, '1 Apr 02:' + m, '1 Apr 06:' + m, '1 Apr 10:' + m, '1 Apr 14:' + m]
      .map((s, i) => [Math.round(649 + i * 42.7), s]);
    plot('xauusd', 646, 46, 320, 1121, days('45'),
      '<path d="M649 261h60v22h-60zM649 301h64v10h-64z" fill="#0000ff"/>' +
      hline(66, '#777') + hline(204, PINK, 2) +
      '<path d="M726.500 48V320M971.500 48V320" stroke="#fff" stroke-dasharray="3 2"/>' +
      '<path d="M1217 48V320" stroke="#999" stroke-width="2" stroke-dasharray="2 2"/>' +
      denseCandles('649,272 655,276 660,268 668,252 675,258 681,260 685,272 692,280 700,285 704,298 708,298 712,288 718,290 722,294 728,288 734,288 738,298 744,286 748,284 751,288 754,270 757,258 760,255 762,225 764,200 767,199 770,212 775,222 780,235 785,246 790,243 797,240 802,246 808,230 813,242 820,246 825,250 830,240 837,234 843,236 850,246 857,246 860,262 865,255 870,220 875,222 880,225 885,230 890,228 894,210 898,190 903,195 906,205 911,190 918,195 922,193 924,170 930,165 936,155 943,147 950,145 955,136 960,135 965,145 973,146 978,130 983,138 989,125 995,102 1000,104 1005,108 1008,125 1014,122 1020,133 1026,128 1032,130 1038,142 1043,140 1050,128 1055,128 1060,112 1066,92 1071,92 1073,84 1077,100 1083,88 1090,98 1097,100 1103,98 1106,88 1110,88 1114,74 1117,65 1119,66',
        13, [[750.5, 286, 316, '#fff'], [859.5, 255, 272, '#fff']]) +
      line('649,256 658,262 680,262 695,268 708,278 720,282 735,285 750,286 757,281 764,267 772,252 780,247 790,248 812,245 825,246 840,242 852,242 865,246 875,241 888,235 893,232 905,220 922,207 935,190 955,164 975,154 985,148 995,136 1007,128 1020,129 1032,129 1045,132 1058,128 1072,116 1085,107 1098,105 1108,101 1114,96 1118,91', '#fff') +
      line('649,286 665,284 685,280 710,283 740,285 757,283 775,272 800,266 830,260 860,257 890,250 910,240 925,234 945,220 971,204 990,192 1010,178 1030,169 1055,162 1085,147 1118,131', '#f4f428') +
      line('770,320 810,316 860,308 910,300 970,290 1030,280 1070,277 1118,270', '#d00018') +
      '<path d="M651 51h6l-3 4z" fill="#fff"/>' + text(658, 56, 'XAUUSD,M15&#160; 4759.64 4761.32 4752.35 4756.55'));
    axis('xauusd', 46, 55, 320, '4769.10 4742.70 4716.30 4689.10 4662.70 4636.30 4609.90 4582.70 4556.30 4529.90 4503.50 4477.10',
      [[66, '4756.55', '#fff', '#000'], [204, '4603.56', '#e85cb0', '#000']]);

    // XAUUSD, short term
    const gold = [
      [425,428,446,448,1],[425,427,442,443,0],[434,439,442,448,1],[434,438,441,449,0],[428,434,440,442,1],[433,434,445,446,0],
      [426,428,446,447,1],[418,420,429,432,1],[414,419,426,429,0],[412,416,425,430,1],[405,406,417,419,1],[383,386,407,408,1],[384,387,391,397,0]
    ];
    plot('gold', 10, 368, 643, 482, [[393, '1 Apr 11:00'], [436, '1 Apr 13:00']],
      hline(391, '#778088') + wide(gold, 74) +
      line('400,463 412,457 430,447 450,437 468,428 474,427', '#fff') +
      line('400,511 412,506 440,493 474,479', '#f4f428'));
    axis('gold', 368, 377, 643, '4767.00 4748.85 4730.15 4711.45 4693.30 4674.60 4656.45 4637.75 4619.05 4600.90 4582.20 4564.05',
      [[391, '4756.55', '#fff', '#000']]);

    // XAGUSD
    plot('xagusd', 646, 368, 643, 1124, days('30'),
      hline(382, PINK, 2) + hline(395, '#667070') + hline(528, PINK, 2) +
      denseCandles('649,576 652,584 656,578 660,575 665,562 671,556 678,564 685,570 690,580 695,577 700,585 704,588 706,600 710,605 715,592 720,592 725,598 730,590 735,595 740,610 745,604 750,600 753,616 755,600 758,578 762,570 764,530 766,490 767,470 769,480 772,495 777,505 783,520 790,522 797,516 801,510 804,532 807,522 811,510 816,525 822,520 827,520 830,505 833,485 838,483 845,480 850,480 855,490 860,490 864,505 869,495 874,478 878,478 883,485 890,488 895,492 898,460 902,445 907,470 911,455 918,458 924,450 926,430 928,415 934,425 940,415 945,404 951,410 957,403 962,398 968,402 973,400 978,392 983,400 990,408 996,410 1000,405 1006,396 1011,420 1017,418 1022,430 1026,445 1031,438 1036,448 1040,450 1046,438 1050,430 1055,420 1058,435 1062,410 1067,397 1071,405 1076,415 1079,440 1083,435 1088,424 1093,432 1098,434 1104,428 1110,415 1115,404 1121,393',
        14, [[753, 600, 637, '#999'], [767.5, 465, 500, TEAL], [1006.5, 383, 405, '#fff'], [827.5, 518, 538, TEAL]]) +
      line('649,603 690,599 712,597 765,595 805,592 870,582 930,574 980,566 1020,560 1060,557 1121,555', '#d00018') +
      line('649,598 700,592 730,582 745,579 760,579 780,571 810,562 830,558 860,548 895,534 930,515 955,492 973,473 990,466 1010,455 1040,443 1060,438 1080,431 1121,421', '#f4f428') +
      line('649,558 665,562 680,561 695,568 710,575 725,582 740,594 755,601 762,596 770,582 785,560 800,535 808,523 817,515 828,519 840,512 855,501 870,495 880,486 895,487 915,478 930,462 945,442 960,424 975,409 985,404 1010,402 1025,412 1040,425 1060,433 1075,429 1095,424 1121,420', '#fff') +
      '<path d="M651 374h6l-3 4z" fill="#fff"/>' + text(658, 379, 'XAGUSD,M15&#160; 75.220 75.450 75.177 75.306'));
    axis('xagusd', 368, 377, 643, '75.750 75.135 74.505 73.875 73.245 72.615 71.985 71.355 70.725 70.095 69.465 68.835',
      [[383, '75.604', '#e85cb0', '#000'], [395, '75.306', '#fff', '#000'], [529, '71.771', '#e85cb0', '#000']]);
  </script>
</body>
</html>
